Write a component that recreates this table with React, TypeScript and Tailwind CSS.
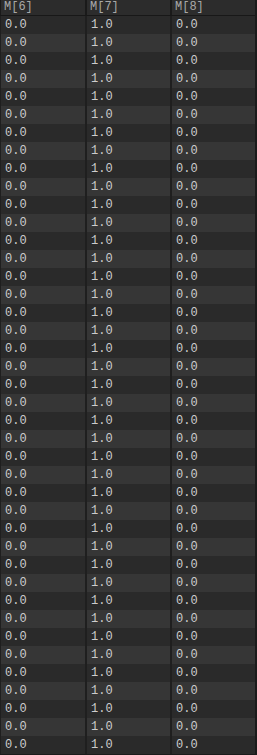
const columns = ["M[6]", "M[7]", "M[8]"];
const values = ["0.0", "1.0", "0.0"];
const rowCount = 41;

export default function App() {
  const rows = Array.from({ length: rowCount }, (_, i) => i);

  return (
    <div className="w-[257px] h-[755px] overflow-hidden bg-[#1b1b1b] flex flex-col font-['Liberation_Mono',monospace]">
      <div className="flex w-[255px] h-[16px] border-b border-[#181818] bg-[#2c2c2c]">
        {columns.map((c) => (
          <div
            key={c}
            className="w-[85px] shrink-0 border-l-2 border-[#1a1a1a] first:border-l pl-[3px] text-[12px] leading-[15px] text-[#a8a8a8]"
          >
            {c}
          </div>
        ))}
      </div>
      {rows.map((r) => (
        <div
          key={r}
          className={`flex w-[255px] h-[18px] ${r % 2 === 0 ? "bg-[#2a2a2a]" : "bg-[#363636]"}`}
        >
          {values.map((v, j) => (
            <div
              key={j}
              className="w-[85px] shrink-0 border-l-2 border-[#1f1f1f] first:border-l pl-[4px] text-[12px] leading-[18px] text-[#cdcdcd]"
            >
              {v}
            </div>
          ))}
        </div>
      ))}
    </div>
  );
}
